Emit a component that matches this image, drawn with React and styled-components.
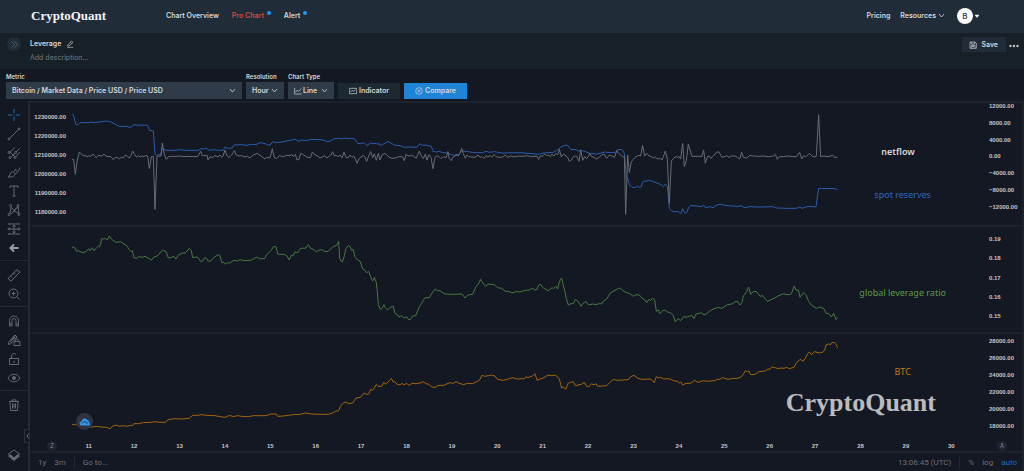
import styled, { createGlobalStyle } from 'styled-components';

const theme = {
  bg: '#141822',
  header: '#202c37',
  sub: '#172026',
  field: '#2f3b48',
  button: '#1c2832',
  blue: '#1f83d6',
  line: '#1d212c',
  edge: '#252934',
  muted: '#6b6f7a',
  icon: '#646874',
  text: '#d5d8dc',
  netflow: '#686b72',
  reserves: '#2b5cab',
  leverage: '#47783f',
  btc: '#a1640f',
};

// Trace points are x,y pairs; x is the shift of that stretch of the trace.
const netflow = [
  { x: -30, points: '36,178 41,179 46,223 51,185 58,156 64,162 70,168 76,167 81,170 87,167 92,170 98,162 104,168 109,173 115,166 120,167 126,168 132,163 138,168 144,170 150,169 156,174 160,179 166,172 172,173 178,176 184,172 190,174 196,165 202,169 208,174 213,166 218,153 224,163 230,172 236,166 240,171 246,168 252,170 258,166 263,169 268,206 274,170 280,169 285,328 291,169 303,168 307,129 313,163 319,178 326,170 334,169 345,169 360,168 372,170 385,169 400,170 414,169 422,154 427,167 438,167 441,165 444,180 450,170 456,173 465,167 474,171 480,165 485,172 489,168 495,150 500,165 506,173 515,165 523,152 529,165 536,168 545,167 555,171 562,169 570,174 580,165 592,160 600,166 607,171 615,177 620,172 630,174 637,146 643,173 650,176 658,167 668,170 680,166 690,167 695,163 700,170 706,163 711,180 717,178 722,160 728,163 736,168 744,173 752,172 757,156 762,162 768,166 774,168 779,174' },
  { x: 750, points: '6,172 14,167 20,174 28,169 33,165 38,155 43,168 48,166 54,170 60,165 66,174 72,156 78,172 84,174 90,165 96,172 101,168 106,176 111,190 117,176 123,171 130,166 135,172 140,184 146,168 152,155 158,173 163,161 169,181 175,160 180,180 187,163 195,160 203,168 210,173 220,175 230,173 240,169 248,171 253,182 258,163 264,168 272,167 280,168 289,175 294,162 298,153 304,168 310,176 316,162 321,180 327,164 333,172 339,206 345,172 351,167 357,170 363,176 370,170 378,173 384,155 388,176 394,182 400,170 406,168 410,162 414,168 420,160 425,145 430,161 436,175 441,165 446,170 455,171 465,172 474,165 480,172 486,170 492,176 498,167 504,171 510,166 516,172 522,163 530,171 540,172 548,171 556,165 562,172 572,168 582,171 595,168 608,169 622,167 634,170 645,169 651,168 656,178 661,168 668,169 674,162 680,167 686,165 691,170 696,162 702,168 708,160 713,165 718,148 724,171 730,162 738,168 743,172 748,184 754,180 760,170 766,168 771,170 777,184 782,149 788,181 794,170 800,176 806,168 809,160 815,170 822,172 830,177 838,172' },
  { x: 1590, points: '5,165 12,162 20,175 28,165 36,168 44,172 50,152 56,160 62,165 68,170 73,170 77,343 83,165 88,218 94,185 100,178 105,172 112,168 117,166 122,168 128,136 134,168 140,160 147,168 155,170 160,175 165,170 172,177 180,175 186,180 190,170 196,153 202,177 208,310 214,183 220,176 226,170 232,172 238,170 242,177 248,130 253,200 259,182 265,132 270,150 276,169 300,169 305,170 311,150 316,190 322,170 328,168 332,175 340,168 350,156 357,156 365,171 372,171 380,167 387,172 395,168 405,168 412,172 419,177 425,157 430,172 440,174 450,166 460,168 475,169 490,168 505,170 520,168 526,163 532,178 538,170 550,170 565,168 580,170 590,170 599,157 605,177 611,167 618,170 628,160 636,168 645,171 649,169 656,44 662,170 672,168 684,170 692,168 698,165 704,173 712,171' },
];

const reserves = [
  { x: -30, points: '36,43 39,44 42,50 44,62 48,74 54,74 60,68 72,68 78,67 84,69 92,66 105,68 115,66 128,65 136,63 146,64 155,67 165,72 176,78 190,80 200,79 208,82 214,81 222,74 235,76 248,75 262,76 265,80 268,91 280,93 285,163 290,166 302,164 306,148 311,146 318,151 345,151 362,149 375,151 415,151 422,146 432,147 440,145 447,151 460,149 475,151 490,151 494,142 506,145 516,144 523,135 545,134 560,136 575,133 588,134 600,128 612,130 622,134 630,136 638,125 650,128 665,126 680,123 692,121 705,117 714,124 728,120 740,122 752,118 779,119' },
  { x: 750, points: '10,120 22,125 32,123 40,117 55,115 66,117 72,114 84,116 92,115 104,117 108,123 113,130 122,131 132,128 140,137 152,129 162,131 170,130 173,134 176,130 180,136 188,134 202,125 212,128 222,135 240,137 253,142 268,141 290,142 300,131 308,136 318,135 334,139 339,154 350,156 358,154 368,158 384,159 390,163 400,165 414,166 425,154 430,153 445,155 465,158 488,158 498,154 508,157 524,155 545,159 600,158 625,160 655,163 672,159 700,157 712,150 722,142 733,136 743,136 752,148 768,149 775,153 790,153 810,160 832,162' },
  { x: 1590, points: '0,160 14,156 30,158 46,157 52,150 60,148 68,151 73,160 76,190 79,234 84,236 88,254 96,262 106,262 113,259 118,262 124,260 128,246 138,243 148,241 158,244 168,248 178,252 186,256 190,260 196,252 202,260 205,290 208,325 214,332 222,335 236,335 242,342 248,326 254,338 260,338 266,322 272,317 290,318 304,320 311,315 316,323 332,320 340,323 352,314 362,313 375,316 395,318 415,319 424,317 432,323 450,320 480,321 520,320 530,324 560,325 590,325 599,321 606,325 618,321 628,319 648,321 652,290 656,265 690,266 696,265 712,268' },
];

const leverage = [
  { x: -30, points: '36,66 44,68 50,79 54,77 60,80 68,83 78,80 86,71 90,77 97,68 102,77 110,68 115,63 119,66 126,39 130,43 136,40 142,45 148,33 154,42 168,52 182,50 192,57 200,62 208,74 214,80 217,77 222,99 230,100 236,95 248,97 255,94 268,101 274,105 282,96 292,93 304,79 310,76 318,80 325,99 335,97 342,94 348,102 356,89 368,84 376,84 388,70 394,78 398,98 408,96 415,99 422,109 427,109 434,98 440,100 444,108 452,108 462,97 474,89 480,92 485,112 492,112 496,118 502,112 508,115 522,106 532,108 540,104 552,107 572,106 590,96 598,101 614,101 620,89 628,81 634,76 640,65 648,65 653,87 664,88 672,88 680,92 688,105 694,90 700,92 705,80 712,84 722,70 738,69 745,59 752,70 762,74 768,80 776,76 785,74 795,80 805,79 820,64 828,63 836,49 839,100 843,108 847,111 852,96 858,70 865,62 870,64 875,76 879,73 886,98 894,106 900,108 908,132 915,136 920,143 926,139 932,155 938,168 943,157 949,172 952,200 955,238 961,253 966,250 972,239 976,248 983,255 990,247 1000,244 1004,264 1012,269 1016,276 1024,272 1032,279 1040,275 1046,284 1052,283 1057,274 1067,272 1075,252 1084,236 1096,217 1107,219 1118,201 1126,192 1132,197' },
  { x: 1110, points: '0,197 12,206 28,208 66,207 75,219 84,210 98,208 108,185 115,177 122,163 128,173 137,184 145,177 163,179 172,188 185,190 196,199 206,199 216,204 228,200 240,201 255,196 268,195 278,190 285,195 291,193 296,180 302,178 308,187 318,194 325,197 336,188 341,191 347,184 353,192 358,170 365,159 369,178 374,196 379,221 385,240 393,236 400,236 406,223 416,231 423,244 430,234 438,230 446,240 458,237 468,239 476,236 484,237 490,228 500,222 512,203 525,196 535,190 542,190 552,200 568,205 580,214 588,209 598,210 606,219 614,224 620,233 627,223 632,227 638,219 644,225 649,259 655,254 660,266 668,257 674,255 683,261 692,264 700,272 706,291 714,281 722,287 732,274 738,277 755,271 762,281 768,267 778,265 785,263 792,270 800,266 812,256 825,250 836,247 845,250' },
  { x: 1962, points: '0,246 10,239 24,237 36,229 42,231 48,240 54,232 58,213 68,200 74,186 80,208 88,199 98,200 108,214 116,212 130,229 146,222 160,214 176,207 196,209 202,206 211,183 216,195 223,195 228,217 238,203 247,212 254,229 262,240 278,250 286,246 300,251 306,265 314,266 322,276 329,265 336,284 341,277' },
];

const btc = [
  { x: -30, points: '36,599 46,599 96,606 110,604 125,606 140,607 150,611 160,602 170,601 178,604 190,602 200,604 212,601 218,602 222,596 235,596 250,593 270,592 285,590 300,592 315,592 325,584 345,581 365,582 388,580 398,571 412,571 425,569 440,571 465,572 480,575 496,577 508,571 520,575 532,572 545,574 565,575 580,572 600,572 618,572 632,567 648,567 653,574 670,573 685,571 700,569 722,568 736,564 755,567 780,568 805,568 820,563 826,559 836,557 842,542 850,534 858,531 866,536 878,534 888,519 902,517 912,504 920,508 926,507 932,493 938,496 943,488 949,478 954,484 964,484 972,472 976,478 983,472 994,460 1000,471 1004,469 1010,477 1020,480 1026,475 1032,480 1040,475 1048,481 1056,475 1068,476 1080,474 1090,470 1098,476 1107,478 1115,486 1125,487 1133,482' },
  { x: 1110, points: '0,481 12,481 24,475 32,473 38,476 48,470 56,474 70,479 82,475 98,476 110,470 118,466 126,451 134,454 145,452 155,450 165,453 172,463 190,466 205,462 218,458 230,462 254,461 258,455 264,458 278,453 285,446 291,466 298,463 312,458 322,451 348,451 358,462 365,489 371,486 377,493 385,474 392,472 400,470 406,482 424,478 433,472 440,484 446,485 454,477 462,479 468,476 473,484 488,483 500,482 508,474 520,463 532,466 565,464 572,455 582,451 592,459 605,463 630,462 637,466 643,473 649,455 655,459 662,457 670,462 688,461 700,467 712,469 718,474 722,471 728,480 738,475 752,475 764,466 774,472 790,467 802,469 825,467 830,463 840,463 848,457' },
  { x: 1962, points: '0,460 12,463 22,461 40,460 50,457 58,448 64,437 70,440 75,438 80,449 94,448 104,440 124,438 132,432 138,433 142,427 152,427 160,431 172,429 180,430 188,427 196,431 210,427 216,415 228,403 238,408 246,396 252,385 256,381 262,389 272,380 286,384 296,382 302,375 306,360 314,357 320,359 324,352 332,353 336,359 341,368' },
];

const tracePoints = (parts, top) =>
  parts
    .map(({ x, points }) =>
      points.split(' ').map((pair) => {
        const [px, py] = pair.split(',').map(Number);
        return `${px + x},${py - top}`;
      }).join(' ')
    )
    .join(' ');

const days = Array.from({ length: 20 }, (_, i) => i + 11);

const toolGroups = [
  [
    { name: 'Cross', active: true, art: <path d="M14 2v9M14 17v9M2 14h9M17 14h9" /> },
    { name: 'Trend line', art: <><path d="M6 22 22 6" /><circle cx="4" cy="24" r="2" /><circle cx="24" cy="4" r="2" /></> },
    { name: 'Pitchfork', art: <><path d="M5 13 16 3M9 21l8-7M17 22 26 12M6 12l10 10M18 12l7-7" /><circle cx="4" cy="13" r="2" /><circle cx="17" cy="13" r="2" /><circle cx="6" cy="23" r="2" /><circle cx="16" cy="23" r="2" /></> },
    { name: 'Brush', art: <><path d="M2 24c5-1 3-9 8-10 4-1 8 3 5 7-2 3-8 3-13 3zM14 13l4-5M17 17c5-2 7-6 9-12M17 9l4 3" /></> },
    { name: 'Text', art: <path d="M6 8V4h16v4M14 4v20M11 24h6" /> },
    { name: 'Patterns', art: <><path d="M6 21 8 8l6 7 8-8 2 14-10-5-6 6M22 7 14 16" /><circle cx="7" cy="5" r="2" /><circle cx="22" cy="5" r="2" /><circle cx="4" cy="23" r="2" /><circle cx="24" cy="23" r="2" /></> },
    { name: 'Forecast', art: <><path d="M4 4h22M6 14h16M4 24h22M14 7v14M11 9l3-3 3 3M11 19l3 3 3-3" /><circle cx="4" cy="14" r="2" /><circle cx="24" cy="14" r="2" /><circle cx="4" cy="4" r="1" /><circle cx="4" cy="24" r="1" /></> },
    { name: 'Back', bright: true, art: <path d="M23 14H8M14 7l-7 7 7 7" strokeWidth="4" /> },
  ],
  [
    { name: 'Measure', art: <path d="M2 21 20 3l6 5L8 26zM7 16l3 3M11 12l2 2M14 9l3 3M18 5l2 2" /> },
    { name: 'Zoom in', art: <><circle cx="13" cy="13" r="9" /><path d="m20 20 5 5M13 9v8M9 13h8" /></> },
  ],
  [
    { name: 'Magnet', art: <path d="M5 24V13a9 9 0 0 1 18 0v11h-5V13a4 4 0 0 0-8 0v11zM5 20h5M18 20h5" /> },
    { name: 'Stay in drawing mode', art: <><path d="M3 19 16 4l4 4L8 21l-5 2zM6 16l4 4M12 9l4 4M14 21v-4h12v8H14zM17 17v-2a3 3 0 0 1 6 0" /><path d="M8 15l8-8" strokeWidth="3" /></> },
    { name: 'Lock drawings', art: <><path d="M5 13h18v12H5zM9 13V8a5 5 0 0 1 9-3" /><path d="M14 18v3" strokeWidth="3" /></> },
    { name: 'Hide drawings', art: <><path d="M2 14c6-10 18-10 24 0-6 10-18 10-24 0z" /><circle cx="14" cy="14" r="3" fill="currentColor" /></> },
  ],
  [{ name: 'Remove', art: <path d="M4 7h20M10 7V4h8v3M6 7l1 18h14l1-18M11 11v10M14 11v10M17 11v10" /> }],
];

export default function App() {
  return (
    <StyledPage>
      <GlobalStyle />
      <StyledHeader>
        <StyledLogo href="#home">CryptoQuant</StyledLogo>
        <StyledNav aria-label="Main">
          <StyledLink href="#overview">Chart Overview</StyledLink>
          <StyledLink href="#pro" $active $dot>Pro Chart</StyledLink>
          <StyledLink href="#alert" $dot>Alert</StyledLink>
        </StyledNav>
        <StyledAccount>
          <StyledLink href="#pricing">Pricing</StyledLink>
          <StyledLink href="#resources">Resources<Chevron /></StyledLink>
          <StyledProfile aria-label="Account menu">
            <StyledAvatar>B</StyledAvatar>
            <StyledIcon $size={6} viewBox="0 0 12 12"><path d="M2 4h8l-4 5z" fill="currentColor" /></StyledIcon>
          </StyledProfile>
        </StyledAccount>
      </StyledHeader>

      <StyledTitleBar>
        <StyledExpand aria-label="Expand panel">
          <StyledIcon $size={9} viewBox="0 0 24 24"><path d="m4 4 8 8-8 8M12 4l8 8-8 8" strokeWidth="2" /></StyledIcon>
        </StyledExpand>
        <StyledTitles>
          <StyledTitle>
            Leverage
            <StyledIconButton aria-label="Rename">
              <StyledIcon $size={8} viewBox="0 0 24 24"><path d="M3 22h19M4 17 16 3l5 4L9 18H4zM13 7l4 4" strokeWidth="2" /></StyledIcon>
            </StyledIconButton>
          </StyledTitle>
          <StyledDescription aria-label="Description" placeholder="Add description..." />
        </StyledTitles>
        <StyledSave>
          <StyledIcon $size={8} viewBox="0 0 24 24"><path d="M3 3h15l4 4v15H3zM8 3v6h9V3M12 13v6M9 16h6M7 22v-9h11v9" strokeWidth="2" /></StyledIcon>
          Save
        </StyledSave>
        <StyledIconButton aria-label="More">
          <StyledIcon $size={10} viewBox="0 0 20 20"><g fill="currentColor" stroke="none"><circle cx="3" cy="10" r="2.4" /><circle cx="10" cy="10" r="2.4" /><circle cx="17" cy="10" r="2.4" /></g></StyledIcon>
        </StyledIconButton>
      </StyledTitleBar>

      <StyledToolbar>
        <Field id="metric" label="Metric" width="236px" value="Bitcoin / Market Data / Price USD / Price USD" />
        <Field id="resolution" label="Resolution" width="38px" value="Hour" />
        <Field
          id="type"
          label="Chart Type"
          width="46px"
          value="Line"
          icon={<StyledIcon $size={8} viewBox="0 0 24 24"><path d="M2 3v18h21M5 15l5-6 4 4 8-8" strokeWidth="2" /></StyledIcon>}
        />
        <StyledButton>
          <StyledIcon $size={8} viewBox="0 0 24 24"><path d="M1 4h22v16H1zM5 15l4-5 4 3 6-5" strokeWidth="2" /></StyledIcon>
          Indicator
        </StyledButton>
        <StyledButton $primary>
          <StyledIcon $size={8} viewBox="0 0 24 24"><circle cx="12" cy="12" r="10" strokeWidth="2" /><path d="M12 7v10M7 12h10" strokeWidth="2" /></StyledIcon>
          Compare
        </StyledButton>
      </StyledToolbar>

      <StyledWorkspace>
        <StyledRail aria-label="Drawing tools">
          {toolGroups.map((tools) => (
            <StyledToolGroup key={tools[0].name}>
              {tools.map((tool) => <Tool key={tool.name} {...tool} />)}
            </StyledToolGroup>
          ))}
          <StyledRailEnd>
            <Tool name="Object tree" art={<><path d="m3 12 11-8 11 8-11 8z" /><path d="m3 16 11 9 11-9-4-2-7 6-7-6z" fill="currentColor" /></>} />
          </StyledRailEnd>
          <StyledHandle aria-label="Hide toolbar">
            <StyledIcon $size={6} viewBox="0 0 12 12"><path d="M8 1 4 6l4 5" strokeWidth="2" /></StyledIcon>
          </StyledHandle>
        </StyledRail>

        <StyledChart>
          <StyledPane $grow={122}>
            <Scale pad="11px 4px 10px 0" labels={['1230000.00', '1220000.00', '1210000.00', '1200000.00', '1190000.00', '1180000.00']} right />
            <StyledPlot>
              <Traces height={366} lines={[[reserves, 9, theme.reserves], [netflow, 9, theme.netflow]]} />
              <StyledNote $left="90.5%" $top="40%" $color="#d8dade" $bold>netflow</StyledNote>
              <StyledNote $left="91%" $top="75%" $color="#2f66bd">spot reserves</StyledNote>
            </StyledPlot>
            <Scale pad="0 0 15px 4px" labels={['12000.00', '8000.00', '4000.00', '0.00', '−4000.00', '−8000.00', '−12000.00']} />
          </StyledPane>
          <StyledPane $grow={105}>
            <StyledScale />
            <StyledPlot>
              <Traces height={315} lines={[[leverage, 6, theme.leverage]]} />
              <StyledNote $left="91%" $top="63%" $color="#5b9a4b">global leverage ratio</StyledNote>
            </StyledPlot>
            <Scale pad="9px 0 13px 4px" labels={['0.19', '0.18', '0.17', '0.16', '0.15']} />
          </StyledPane>
          <StyledPane $grow={104} $last>
            <StyledScale />
            <StyledPlot>
              <Traces height={312} lines={[[btc, 327, theme.btc]]} />
              <StyledNote $left="91%" $top="37%" $color="#c47a14">BTC</StyledNote>
              <StyledWatermark>CryptoQuant</StyledWatermark>
              <StyledCloud>
                <StyledIcon $size={12} viewBox="0 0 24 24">
                  <path d="M5 19a4 4 0 0 1 0-8 6 6 0 0 1 11-3 5 5 0 0 1 5 6 3 3 0 0 1-1 5z" fill="#2f97ee" stroke="none" />
                  <path d="m6 15 5-5 4 5 4-3" stroke="#2b3550" strokeWidth="2" />
                </StyledIcon>
              </StyledCloud>
            </StyledPlot>
            <Scale pad="4px 0 9px 4px" labels={['28000.00', '26000.00', '24000.00', '22000.00', '20000.00', '18000.00']} />
          </StyledPane>
          <StyledTimeAxis>
            <StyledAxisButton aria-label="Time zone">Z</StyledAxisButton>
            <StyledDays>{days.map((day) => <span key={day}>{day}</span>)}</StyledDays>
            <StyledAxisButton aria-label="Auto scale">A</StyledAxisButton>
          </StyledTimeAxis>
          <StyledFooter>
            <StyledFooterButton>1y</StyledFooterButton>
            <StyledFooterButton>3m</StyledFooterButton>
            <StyledDivider />
            <StyledFooterButton>Go to...</StyledFooterButton>
            <StyledClock>13:06:45 (UTC)</StyledClock>
            <StyledDivider />
            <StyledFooterButton>%</StyledFooterButton>
            <StyledFooterButton>log</StyledFooterButton>
            <StyledFooterButton $active>auto</StyledFooterButton>
          </StyledFooter>
        </StyledChart>
      </StyledWorkspace>
    </StyledPage>
  );
}

const Chevron = () => (
  <StyledIcon $size={7} viewBox="0 0 14 14"><path d="m2 4 5 6 5-6" strokeWidth="1.6" /></StyledIcon>
);

const Field = ({ id, label, width, value, icon }) => (
  <StyledField $width={width}>
    <StyledLabel htmlFor={id}>{label}</StyledLabel>
    <StyledSelectBox>
      {icon}
      <StyledSelect id={id}><option>{value}</option></StyledSelect>
      <Chevron />
    </StyledSelectBox>
  </StyledField>
);

const Tool = ({ name, art, active, bright }) => (
  <StyledTool aria-label={name} $active={active} $bright={bright}>
    <StyledIcon $size={14} viewBox="0 0 28 28">{art}</StyledIcon>
  </StyledTool>
);

const Scale = ({ labels, pad, right }) => (
  <StyledScale $pad={pad} $right={right}>
    {labels.map((label) => <span key={label}>{label}</span>)}
  </StyledScale>
);

const Traces = ({ height, lines }) => (
  <StyledTraces viewBox={`0 0 2745 ${height}`} preserveAspectRatio="none" aria-hidden="true">
    {lines.map(([parts, top, color]) => (
      <polyline key={color} points={tracePoints(parts, top)} stroke={color} vectorEffect="non-scaling-stroke" />
    ))}
  </StyledTraces>
);

const GlobalStyle = createGlobalStyle`
  * {
    box-sizing: border-box;
  }
  body {
    margin: 0;
    background: ${theme.bg};
    color: ${theme.text};
    font-family: Inter, 'Liberation Sans', sans-serif;
    font-size: 7px;
    line-height: 10px;
  }
  button, input, select {
    margin: 0;
    padding: 0;
    border: none;
    background: none;
    color: inherit;
    font: inherit;
  }
`

const StyledPage = styled.div`
  min-height: 100vh;
  display: flex;
  flex-flow: column nowrap;
`

const StyledIcon = styled.svg`
  width: ${({ $size }) => $size}px;
  height: ${({ $size }) => $size}px;
  flex: none;
  display: block;
  fill: none;
  stroke: currentColor;
`

const StyledHeader = styled.header`
  height: 33px;
  padding: 0 44px 2px 31px;
  display: flex;
  align-items: center;
  background: ${theme.header};
`

const StyledLogo = styled.a`
  width: 135px;
  color: #f2f3f4;
  font: bold 13px/16px 'Liberation Serif', serif;
  text-decoration: none;
`

const StyledNav = styled.nav`
  display: flex;
  gap: 13px;
`

const StyledLink = styled.a`
  display: flex;
  align-items: center;
  gap: 2px;
  color: ${({ $active }) => ($active ? '#d8483f' : theme.text)};
  font-weight: 600;
  text-decoration: none;
  &::after {
    content: '';
    display: ${({ $dot }) => ($dot ? 'block' : 'none')};
    width: 4px;
    height: 4px;
    margin: 0 0 5px 1px;
    border-radius: 50%;
    background: #2196f3;
  }
`

const StyledAccount = styled.div`
  margin-left: auto;
  display: flex;
  align-items: center;
  gap: 10px;
`

const StyledProfile = styled.button`
  margin-left: 2px;
  display: flex;
  align-items: center;
  gap: 1px;
  color: #ffffff;
`

const StyledAvatar = styled.span`
  width: 16px;
  height: 16px;
  border-radius: 50%;
  background: #ffffff;
  color: #26323d;
  font-size: 8px;
  font-weight: 500;
  line-height: 16px;
  text-align: center;
`

const StyledTitleBar = styled.section`
  height: 36px;
  padding: 4px 5px 0 7px;
  display: flex;
  align-items: flex-start;
  background: ${theme.sub};
`

const StyledExpand = styled.button`
  width: 14px;
  height: 14px;
  display: grid;
  place-items: center;
  border-radius: 50%;
  background: #212d38;
  color: #5e6b78;
`

const StyledTitles = styled.div`
  flex: 1;
  margin-left: 9px;
`

const StyledTitle = styled.h1`
  margin: 0;
  display: flex;
  align-items: center;
  gap: 5px;
  font-size: 7px;
  font-weight: 600;
  line-height: 13px;
`

const StyledDescription = styled.input`
  width: 160px;
  height: 14px;
  display: block;
  color: ${theme.text};
  &::placeholder {
    color: #747b82;
    opacity: 1;
  }
`

const StyledIconButton = styled.button`
  color: #c3c6ca;
`

const StyledSave = styled.button`
  height: 15px;
  margin-right: 3px;
  padding: 0 8px 0 7px;
  display: flex;
  align-items: center;
  gap: 4px;
  background: #202c37;
  font-weight: 600;
  & + ${StyledIconButton} {
    margin-top: 4px;
  }
`

const StyledToolbar = styled.section`
  padding: 3px 6px 2px;
  display: flex;
  align-items: flex-end;
  gap: 4px;
`

const StyledField = styled.div`
  width: ${({ $width }) => $width};
`

const StyledLabel = styled.label`
  display: block;
  font-size: 6px;
  font-weight: 600;
  line-height: 10px;
  white-space: nowrap;
`

const StyledSelectBox = styled.div`
  height: 17px;
  padding: 0 6px;
  display: flex;
  align-items: center;
  gap: 1px;
  background: ${theme.field};
`

const StyledSelect = styled.select`
  min-width: 0;
  flex: 1;
  appearance: none;
  font-weight: 600;
`

const StyledButton = styled.button`
  height: 16px;
  padding: 0 11px;
  display: flex;
  align-items: center;
  gap: 2px;
  background: ${({ $primary }) => ($primary ? theme.blue : theme.button)};
  font-weight: 600;
`

const StyledWorkspace = styled.main`
  flex: 1;
  display: flex;
`

const StyledRail = styled.aside`
  width: 30px;
  position: relative;
  display: flex;
  flex-flow: column nowrap;
  border-right: 2px solid ${theme.edge};
`

const StyledToolGroup = styled.div`
  padding: 4px 0 3px;
  border-bottom: 1px solid ${theme.edge};
  &:nth-of-type(4) {
    border-bottom: none;
  }
`

const StyledTool = styled.button`
  width: 100%;
  height: 19px;
  display: grid;
  place-items: center;
  color: ${({ $active, $bright }) => ($active ? '#1d6ab5' : $bright ? '#9a9da4' : theme.icon)};
  stroke-width: 2;
`

const StyledRailEnd = styled.div`
  margin-top: auto;
  padding-bottom: 7px;
`

const StyledHandle = styled.button`
  width: 5px;
  height: 14px;
  position: absolute;
  right: -1px;
  bottom: 28px;
  display: grid;
  place-items: center;
  border: 1px solid #2c303b;
  border-right: none;
  border-radius: 2px 0 0 2px;
  background: ${theme.bg};
  color: ${theme.muted};
`

const StyledChart = styled.section`
  min-width: 0;
  flex: 1;
  display: flex;
  flex-flow: column nowrap;
  border-top: 2px solid ${theme.line};
  border-right: 2px solid ${theme.line};
`

const StyledPane = styled.div`
  min-height: 60px;
  flex: ${({ $grow }) => $grow} 1 0;
  display: grid;
  grid-template-columns: 40px 1fr 37px;
  box-shadow: ${({ $last }) => ($last ? 'none' : `0 2px 0 ${theme.line}`)};
  margin-bottom: ${({ $last }) => ($last ? '0' : '2px')};
`

const StyledScale = styled.div`
  padding: ${({ $pad }) => $pad || '0'};
  display: flex;
  flex-flow: column nowrap;
  justify-content: space-between;
  align-items: ${({ $right }) => ($right ? 'flex-end' : 'flex-start')};
  color: #c3c5ca;
  font: bold 6px/6px 'Liberation Sans', sans-serif;
`

const StyledPlot = styled.div`
  min-width: 0;
  min-height: 0;
  position: relative;
`

const StyledTraces = styled.svg`
  width: 100%;
  height: 100%;
  position: absolute;
  inset: 0;
  fill: none;
  stroke-width: 1;
  stroke-linejoin: round;
`

const StyledNote = styled.span`
  position: absolute;
  left: ${({ $left }) => $left};
  top: ${({ $top }) => $top};
  transform: translate(-50%, -50%);
  color: ${({ $color }) => $color};
  font-family: 'Noto Sans', sans-serif;
  font-size: 9px;
  font-weight: ${({ $bold }) => ($bold ? 600 : 400)};
  line-height: 12px;
  white-space: nowrap;
`

const StyledWatermark = styled.div`
  position: absolute;
  right: 49px;
  bottom: 19px;
  color: #b9bbbf;
  font: bold 26px/32px 'Liberation Serif', serif;
`

const StyledCloud = styled.div`
  width: 17px;
  height: 17px;
  position: absolute;
  left: 6px;
  bottom: 8px;
  display: grid;
  place-items: center;
  border-radius: 50%;
  background: #303442;
`

const StyledTimeAxis = styled.div`
  height: 13px;
  padding-top: 2px;
  display: grid;
  grid-template-columns: 36px 1fr 48px;
  align-items: center;
  justify-items: center;
`

const StyledDays = styled.div`
  width: 100%;
  display: grid;
  grid-template-columns: repeat(20, 1fr);
  color: #c3c5ca;
  font: bold 6px/6px 'Liberation Sans', sans-serif;
  text-align: center;
`

const StyledAxisButton = styled.button`
  width: 10px;
  height: 10px;
  margin-left: 8px;
  border-radius: 50%;
  background: #20242f;
  color: #80838c;
  font-size: 6px;
  line-height: 10px;
`

const StyledFooter = styled.footer`
  height: 20px;
  padding: 2px 5px 0 8px;
  display: flex;
  align-items: center;
  gap: 8px;
  border-top: 2px solid ${theme.line};
  color: ${theme.muted};
  font-family: Roboto, sans-serif;
  font-size: 8px;
`

const StyledFooterButton = styled.button`
  color: ${({ $active }) => ($active ? '#1c6cbd' : theme.muted)};
`

const StyledDivider = styled.span`
  width: 1px;
  height: 12px;
  background: ${theme.edge};
`

const StyledClock = styled.span`
  margin-left: auto;
`
